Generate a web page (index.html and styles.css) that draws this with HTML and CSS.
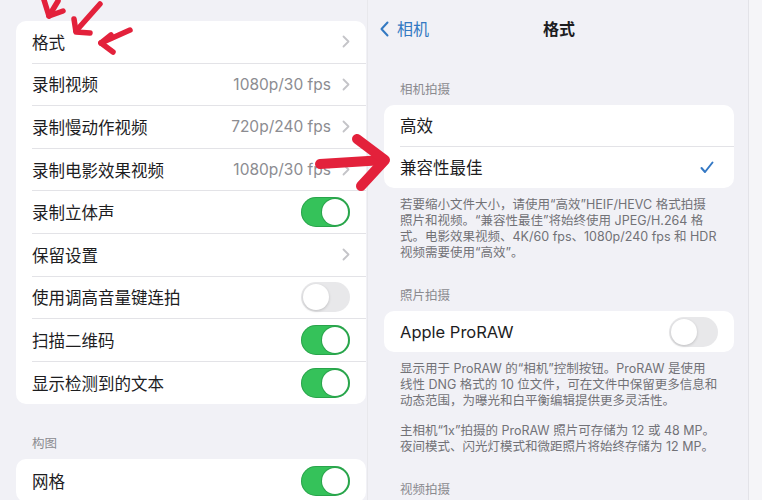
FILE: index.html
```html
<!DOCTYPE html>
<html lang="zh-CN">
<head>
    <meta charset="UTF-8">
    <meta name="viewport" content="width=device-width, initial-scale=1.0">
    <title>相机 - 格式</title>
    <link rel="stylesheet" href="styles.css">
</head>
<body>
    <div class="screen">
        <!-- Camera settings list -->
        <section class="pane pane-left">
            <ul class="group">
                <li class="row">格式<svg class="chevron" viewBox="0 0 8 13"><path d="M1.5 1.5 L6.5 6.5 L1.5 11.5"/></svg></li>
                <li class="row">录制视频<span class="value">1080p/30 fps</span><svg class="chevron" viewBox="0 0 8 13"><path d="M1.5 1.5 L6.5 6.5 L1.5 11.5"/></svg></li>
                <li class="row">录制慢动作视频<span class="value">720p/240 fps</span><svg class="chevron" viewBox="0 0 8 13"><path d="M1.5 1.5 L6.5 6.5 L1.5 11.5"/></svg></li>
                <li class="row">录制电影效果视频<span class="value">1080p/30 fps</span><svg class="chevron" viewBox="0 0 8 13"><path d="M1.5 1.5 L6.5 6.5 L1.5 11.5"/></svg></li>
                <li class="row">录制立体声<span class="toggle on"></span></li>
                <li class="row">保留设置<svg class="chevron" viewBox="0 0 8 13"><path d="M1.5 1.5 L6.5 6.5 L1.5 11.5"/></svg></li>
                <li class="row">使用调高音量键连拍<span class="toggle"></span></li>
                <li class="row">扫描二维码<span class="toggle on"></span></li>
                <li class="row">显示检测到的文本<span class="toggle on"></span></li>
            </ul>
            <div class="group-title group-title-wide">构图</div>
            <ul class="group">
                <li class="row">网格<span class="toggle on"></span></li>
            </ul>
        </section>

        <!-- Format detail page -->
        <section class="pane pane-right">
            <header class="nav">
                <a class="back" href="#">
                    <svg class="back-icon" viewBox="0 0 9 16"><path d="M7.5 1.5 L1.5 8 L7.5 14.5"/></svg>相机
                </a>
                <h1 class="nav-title">格式</h1>
                <span></span>
            </header>

            <div class="group-title">相机拍摄</div>
            <ul class="group">
                <li class="row row-compact">高效</li>
                <li class="row row-compact">兼容性最佳<svg class="check" viewBox="0 0 14 13"><path d="M1.5 7 L5 11 L12.5 1.5"/></svg></li>
            </ul>
            <p class="note">若要缩小文件大小，请使用“高效”HEIF/HEVC 格式拍摄<br>照片和视频。“兼容性最佳”将始终使用 JPEG/H.264 格<br>式。电影效果视频、4K/60 fps、1080p/240 fps 和 HDR<br>视频需要使用“高效”。</p>

            <div class="group-title">照片拍摄</div>
            <ul class="group">
                <li class="row row-compact row-short">Apple ProRAW<span class="toggle"></span></li>
            </ul>
            <p class="note">显示用于 ProRAW 的“相机”控制按钮。ProRAW 是使用<br>线性 DNG 格式的 10 位文件，可在文件中保留更多信息和<br>动态范围，为曝光和白平衡编辑提供更多灵活性。</p>
            <p class="note note-gap">主相机“1x”拍摄的 ProRAW 照片可存储为 12 或 48 MP。<br>夜间模式、闪光灯模式和微距照片将始终存储为 12 MP。</p>

            <div class="group-title">视频拍摄</div>
        </section>

        <div class="pane-edge"></div>

        <!-- hand-drawn red arrows on top -->
        <svg class="marks" viewBox="0 0 762 500">
            <g class="mark-thin">
                <path d="M44 0 L49 16 L63 11"/>
                <path d="M49 16 L58 1"/>
                <path d="M100 4 L76 31"/>
                <path d="M74 19 L76 32 L90 33"/>
                <path d="M130 30 L101 43"/>
                <path d="M101 43 L111 35"/>
                <path d="M101 43 L113 52"/>
            </g>
            <g class="mark-thick">
                <path d="M320 164 L384 160"/>
                <path d="M357 139 L385 160 L361 186"/>
            </g>
        </svg>
    </div>
</body>
</html>
```

FILE: styles.css
```css
* {
    box-sizing: border-box;
}

body {
    margin: 0;
    background-color: #f1f1f6;
    font-family: Inter, "Noto Sans CJK SC", sans-serif;
    color: #1d1d1f;
}

.screen {
    position: relative;
    display: flex;
    width: 762px;
    height: 500px;
    overflow: hidden;
}

.pane {
    flex: none;
}

.pane-left {
    width: 368px;
    padding: 21px 1px 0 16px;
    border-right: 1px solid #e8e8ec;
}

.pane-right {
    width: 381px;
    padding: 0 14px 0 16px;
    border-right: 1px solid #e3e3e8;
}

.pane-edge {
    flex: 1;
    background-color: #f5f5f8;
}

/* grouped list */
.group {
    list-style: none;
    margin: 0;
    padding: 0 0 0 16px;
    background-color: white;
    border-radius: 10px;
}

.row {
    display: flex;
    align-items: center;
    height: 42.6px;
    padding-right: 16px;
    font-size: 16.5px;
    border-bottom: 1px solid #e3e3e7;
}

.row:last-child {
    border-bottom: none;
}

.row-compact {
    height: 41.5px;
}

.row-short {
    height: 41px;
}

.value {
    margin-left: auto;
    font-size: 15.5px;
    color: #8c8c91;
}

.chevron {
    width: 8px;
    height: 13px;
    margin-left: auto;
    fill: none;
    stroke: #c4c4c8;
    stroke-width: 1.8;
    stroke-linecap: round;
    stroke-linejoin: round;
}

.value + .chevron {
    margin-left: 11px;
}

.check {
    width: 14px;
    height: 13px;
    margin-left: auto;
    margin-right: 4px;
    fill: none;
    stroke: #3478c4;
    stroke-width: 2;
    stroke-linecap: round;
    stroke-linejoin: round;
}

/* switches */
.toggle {
    position: relative;
    width: 49px;
    height: 30px;
    margin-left: auto;
    border-radius: 15px;
    background-color: #e8e8ea;
}

.toggle::after {
    content: "";
    position: absolute;
    top: 2px;
    left: 2px;
    width: 26px;
    height: 26px;
    border-radius: 50%;
    background-color: white;
    box-shadow: 0 1px 3px rgba(0, 0, 0, 0.18);
}

.toggle.on {
    background-color: #35c25a;
    box-shadow: inset 0 0 0 1px rgba(20, 110, 50, 0.35);
}

.toggle.on::after {
    left: 21px;
    box-shadow: 0 0 0 1px rgba(20, 110, 50, 0.35);
}

.group-title {
    padding: 26px 16px 6px;
    font-size: 12.5px;
    line-height: 18px;
    color: #8a8a8f;
}

.group-title-wide {
    padding-top: 31px;
}

/* navigation bar */
.nav {
    display: grid;
    grid-template-columns: 1fr auto 1fr;
    align-items: start;
    height: 55px;
    padding-top: 19px;
    margin-left: -4px;
}

.back {
    display: flex;
    align-items: center;
    gap: 8px;
    font-size: 16px;
    line-height: 20px;
    color: #3379c2;
    text-decoration: none;
}

.back-icon {
    width: 9px;
    height: 16px;
    fill: none;
    stroke: #3379c2;
    stroke-width: 2;
    stroke-linecap: round;
    stroke-linejoin: round;
}

.nav-title {
    margin: 0;
    font-size: 16px;
    line-height: 20px;
    font-weight: 600;
    margin-left: 4px;
}

.note {
    margin: 0;
    padding: 9px 16px 0;
    font-size: 12.5px;
    line-height: 16px;
    color: #727277;
    white-space: nowrap;
}

.note-gap {
    padding-top: 14px;
}

.marks {
    position: absolute;
    top: 0;
    left: 0;
    width: 762px;
    height: 500px;
    pointer-events: none;
}

.marks path {
    fill: none;
    stroke: #e3213b;
    stroke-linecap: round;
    stroke-linejoin: round;
}

.mark-thin path {
    stroke-width: 5.5;
}

.mark-thick path {
    stroke-width: 10;
}
```
